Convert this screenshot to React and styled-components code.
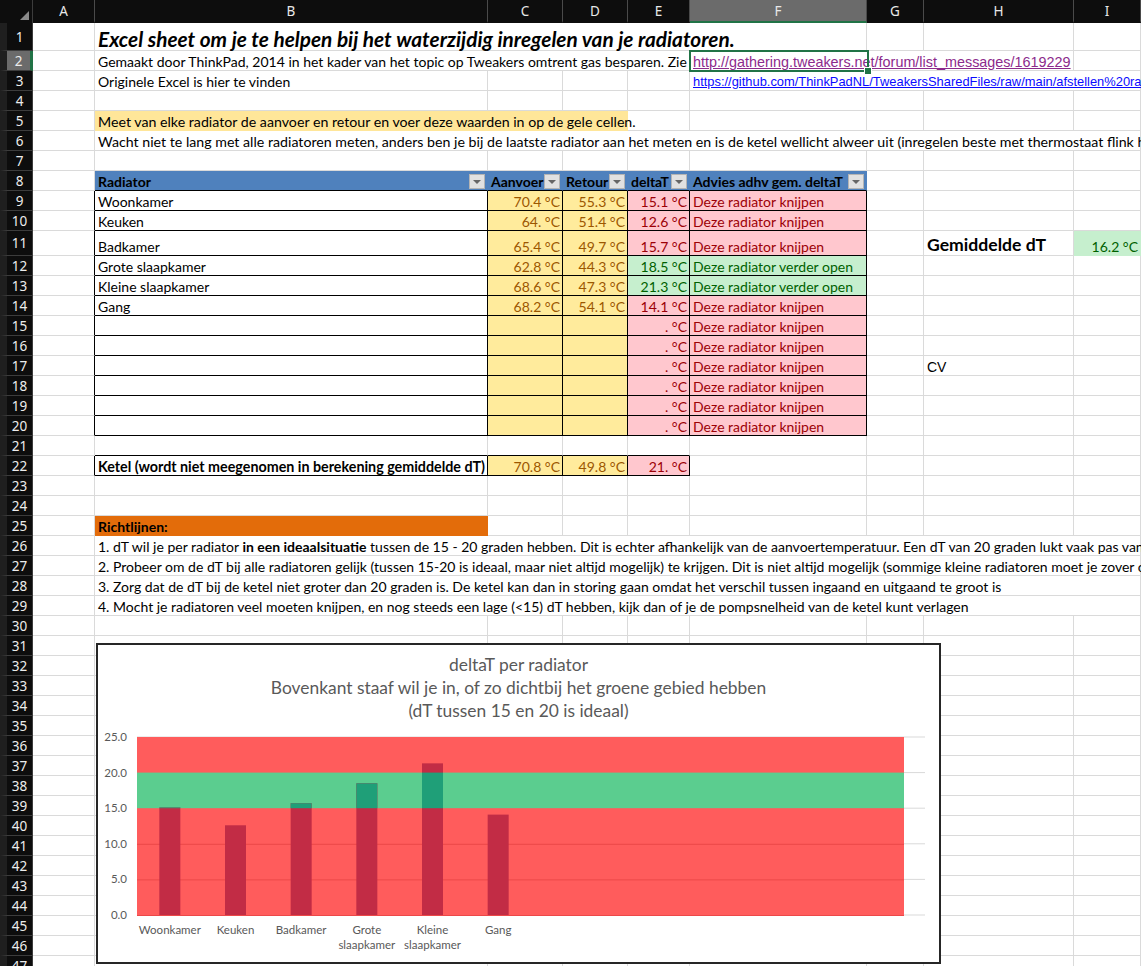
import React from 'react';
import styled, { createGlobalStyle } from 'styled-components';

const GlobalStyle = createGlobalStyle`
  html, body {
    margin: 0;
    padding: 0;
    background: #ffffff;
    overflow: hidden;
  }
`;

const GRID = '#dadada';
const BLACK = '#000000';
const BLUE = '#4f81bd';
const NEUTRAL = { $bg: '#ffeb9c', $fg: '#9c5700' };
const BAD = { $bg: '#ffc7ce', $fg: '#9c0006' };
const GOOD = { $bg: '#c6efce', $fg: '#006100' };

const COLS = { A: 62, B: 393, C: 75, D: 65, E: 62, F: 177, G: 57, H: 150, I: 67 };
const ORDER = ['A', 'B', 'C', 'D', 'E', 'F', 'G', 'H', 'I'];

const rowHeight = (n) => (n === 1 ? 28 : n === 11 ? 25 : 20);

const Sheet = styled.div`
  position: relative;
  width: 1141px;
  height: 966px;
  overflow: hidden;
  background: #ffffff;
  font-family: Lato, "Open Sans", sans-serif;
  font-size: 14px;
  color: #000;
`;

const HeaderBar = styled.div`
  display: flex;
  height: 23px;
  background: #0d0d0d;
`;

const Corner = styled.div`
  position: relative;
  flex: none;
  width: 33px;
  box-sizing: border-box;
  border-right: 1px solid #3c3c3c;

  &::after {
    content: '';
    position: absolute;
    right: 3px;
    bottom: 3px;
    border-style: solid;
    border-width: 0 0 9px 9px;
    border-color: transparent transparent #8a8a8a transparent;
  }
`;

const ColHead = styled.div`
  flex: none;
  width: ${(p) => p.$w}px;
  box-sizing: border-box;
  display: flex;
  align-items: flex-end;
  justify-content: center;
  padding-bottom: 2px;
  background: ${(p) => (p.$sel ? '#6b6b6b' : '#0d0d0d')};
  border-right: 1px solid #4a4a4a;
  border-bottom: 2px solid ${(p) => (p.$sel ? '#217346' : '#0d0d0d')};
  color: #e8e8e8;
  font-family: "Noto Sans", "DejaVu Sans", sans-serif;
  font-size: 13.5px;
  line-height: 16px;
`;

const Row = styled.div`
  display: flex;
  flex: none;
  height: ${(p) => p.$h}px;
`;

const RowHead = styled.div`
  flex: none;
  width: 33px;
  box-sizing: border-box;
  display: flex;
  align-items: center;
  justify-content: center;
  background: ${(p) => (p.$sel ? '#6b6b6b' : '#0d0d0d')};
  border-left: 7px solid #1f1f1f;
  border-right: ${(p) => (p.$sel ? '3px solid #217346' : '1px solid #3c3c3c')};
  border-bottom: 1px solid #3c3c3c;
  color: #ececec;
  font-family: "Noto Sans", "DejaVu Sans", sans-serif;
  font-size: 13.5px;
`;

const Cell = styled.div`
  flex: none;
  box-sizing: border-box;
  width: ${(p) => p.$w}px;
  display: flex;
  align-items: flex-end;
  justify-content: ${(p) => (p.$right ? 'flex-end' : 'flex-start')};
  padding: 0 2px 0 3px;
  border-right: 1px solid ${(p) => p.$rb || p.$bg || GRID};
  border-bottom: 1px solid ${(p) => p.$bb || p.$bg || GRID};
  background: ${(p) => p.$bg || 'transparent'};
  color: ${(p) => p.$fg || '#000'};
  font-weight: ${(p) => (p.$bold ? 700 : 400)};
  line-height: 16px;
  white-space: nowrap;
`;

const Title = styled.span`
  font-size: 20.8px;
  font-weight: 700;
  font-style: italic;
  line-height: 23px;
`;

const BigLabel = styled.span`
  font-size: 17.6px;
  font-weight: 700;
  line-height: 21px;
`;

const Link = styled.span`
  font-family: "Liberation Sans", Arial, sans-serif;
  font-size: ${(p) => (p.$visited ? 14.4 : 12.9)}px;
  color: ${(p) => (p.$visited ? '#8c2a8c' : '#0a0aff')};
  text-decoration: underline;
`;

const Plain = styled.span`
  font-family: "Liberation Sans", Arial, sans-serif;
  font-size: 14px;
`;

const Wide = styled.span`
  font-size: 14.3px;
`;

const Fill = styled.span`
  font-size: 14.2px;
`;

const HeadLabel = styled.span`
  font-weight: 700;
`;

const FilterBtn = styled.span`
  flex: none;
  margin-left: auto;
  margin-bottom: 1px;
  width: 16px;
  height: 15px;
  box-sizing: border-box;
  display: flex;
  align-items: center;
  justify-content: center;
  background: #e1e1e1;
  border: 1px solid #b4b4b4;

  &::after {
    content: '';
    border-style: solid;
    border-width: 4px 4px 0 4px;
    border-color: #666 transparent transparent transparent;
  }
`;

const Selection = styled.div`
  position: absolute;
  left: 689px;
  top: 50px;
  width: 180px;
  height: 22px;
  box-sizing: border-box;
  border: 2px solid #217346;
  pointer-events: none;

  &::after {
    content: '';
    position: absolute;
    right: -5px;
    bottom: -5px;
    width: 6px;
    height: 6px;
    background: #217346;
    border: 1px solid #ffffff;
  }
`;

const ChartBox = styled.div`
  position: absolute;
  left: 96px;
  top: 643px;
  width: 845px;
  height: 321px;
  box-sizing: border-box;
  border: 2px solid #262626;
  background: #ffffff;
  display: flex;
  flex-direction: column;
  align-items: center;
`;

const ChartTitle = styled.div`
  margin-top: 8px;
  font-family: Lato, "Open Sans", sans-serif;
  font-size: 17.4px;
  line-height: 23px;
  color: #595959;
  text-align: center;
`;

const Plot = styled.svg`
  display: block;
  align-self: flex-start;
  font-family: Lato, "Open Sans", sans-serif;
`;

const TABLE = [
  ['Woonkamer', '70.4 °C', '55.3 °C', '15.1 °C', false],
  ['Keuken', '64. °C', '51.4 °C', '12.6 °C', false],
  ['Badkamer', '65.4 °C', '49.7 °C', '15.7 °C', false],
  ['Grote slaapkamer', '62.8 °C', '44.3 °C', '18.5 °C', true],
  ['Kleine slaapkamer', '68.6 °C', '47.3 °C', '21.3 °C', true],
  ['Gang', '68.2 °C', '54.1 °C', '14.1 °C', false],
  ['', '', '', '. °C', false],
  ['', '', '', '. °C', false],
  ['', '', '', '. °C', false],
  ['', '', '', '. °C', false],
  ['', '', '', '. °C', false],
  ['', '', '', '. °C', false],
];

const box = { $rb: BLACK, $bb: BLACK };
const head = { $bg: BLUE, $bb: BLACK, $rb: BLUE };

function buildSpecs() {
  const specs = {};
  specs[1] = { B: { to: 'F', text: <Title>Excel sheet om je te helpen bij het waterzijdig inregelen van je radiatoren.</Title> } };
  specs[2] = {
    B: { to: 'E', text: 'Gemaakt door ThinkPad, 2014 in het kader van het topic op Tweakers omtrent gas besparen. Zie' },
    F: { to: 'H', text: <Link $visited>http://gathering.tweakers.net/forum/list_messages/1619229</Link> },
  };
  specs[3] = {
    B: { text: 'Originele Excel is hier te vinden' },
    F: { to: 'I', text: <Link>https://github.com/ThinkPadNL/TweakersSharedFiles/raw/main/afstellen%20radiatoren.xlsx</Link> },
  };
  specs[5] = { B: { to: 'D', $bg: '#ffe699', text: <Fill>Meet van elke radiator de aanvoer en retour en voer deze waarden in op de gele cellen.</Fill> } };
  specs[6] = {
    B: { to: 'I', text: <Fill>Wacht niet te lang met alle radiatoren meten, anders ben je bij de laatste radiator aan het meten en is de ketel wellicht alweer uit (inregelen beste met thermostaat flink hoog)</Fill> },
  };
  specs[8] = {
    B: { ...head, text: <><HeadLabel>Radiator</HeadLabel><FilterBtn /></> },
    C: { ...head, text: <><HeadLabel>Aanvoer</HeadLabel><FilterBtn /></> },
    D: { ...head, text: <><HeadLabel>Retour</HeadLabel><FilterBtn /></> },
    E: { ...head, text: <><HeadLabel>deltaT</HeadLabel><FilterBtn /></> },
    F: { ...head, text: <><HeadLabel>Advies adhv gem. deltaT</HeadLabel><FilterBtn /></> },
  };
  TABLE.forEach(([name, aan, ret, dt, good], i) => {
    const tone = good ? GOOD : BAD;
    specs[9 + i] = {
      A: { $rb: BLACK },
      B: { ...box, text: name },
      C: { ...box, ...NEUTRAL, $right: true, text: aan },
      D: { ...box, ...NEUTRAL, $right: true, text: ret },
      E: { ...box, ...tone, $right: true, text: dt },
      F: { ...box, ...tone, text: good ? 'Deze radiator verder open' : 'Deze radiator knijpen' },
    };
  });
  specs[11].H = { text: <BigLabel>Gemiddelde dT</BigLabel> };
  specs[11].I = { ...GOOD, $right: true, text: '16.2 °C' };
  specs[17].H = { text: <Plain>CV</Plain> };
  specs[21] = { B: { $bb: BLACK }, C: { $bb: BLACK }, D: { $bb: BLACK }, E: { $bb: BLACK } };
  specs[22] = {
    A: { $rb: BLACK },
    B: { ...box, $bold: true, text: <Wide>Ketel (wordt niet meegenomen in berekening gemiddelde dT)</Wide> },
    C: { ...box, ...NEUTRAL, $right: true, text: '70.8 °C' },
    D: { ...box, ...NEUTRAL, $right: true, text: '49.8 °C' },
    E: { ...box, ...BAD, $right: true, text: '21. °C' },
  };
  specs[25] = { B: { $bg: '#e36c0a', $bold: true, text: 'Richtlijnen:' } };
  specs[26] = {
    B: {
      to: 'I',
      text: (
        <span>
          1. dT wil je per radiator <b>in een ideaalsituatie</b> tussen de 15 - 20 graden hebben. Dit is echter afhankelijk van de aanvoertemperatuur. Een dT van 20 graden lukt vaak pas vanaf 60+ graden aanvoer
        </span>
      ),
    },
  };
  specs[27] = {
    B: { to: 'I', text: '2. Probeer om de dT bij alle radiatoren gelijk (tussen 15-20 is ideaal, maar niet altijd mogelijk) te krijgen. Dit is niet altijd mogelijk (sommige kleine radiatoren moet je zover open zetten)' },
  };
  specs[28] = {
    B: { to: 'I', text: '3. Zorg dat de dT bij de ketel niet groter dan 20 graden is. De ketel kan dan in storing gaan omdat het verschil tussen ingaand en uitgaand te groot is' },
  };
  specs[29] = {
    B: { to: 'I', text: '4. Mocht je radiatoren veel moeten knijpen, en nog steeds een lage (<15) dT hebben, kijk dan of je de pompsnelheid van de ketel kunt verlagen' },
  };
  return specs;
}

const SPECS = buildSpecs();

function SheetRow({ n }) {
  const spec = SPECS[n] || {};
  const cells = [];
  for (let i = 0; i < ORDER.length; i++) {
    const c = ORDER[i];
    const { to, text, ...rest } = spec[c] || {};
    const end = to ? ORDER.indexOf(to) : i;
    const w = ORDER.slice(i, end + 1).reduce((s, k) => s + COLS[k], 0);
    cells.push(
      <Cell key={c} $w={w} {...rest}>
        {text}
      </Cell>
    );
    i = end;
  }
  return (
    <Row $h={rowHeight(n)}>
      <RowHead $sel={n === 2}>{n}</RowHead>
      {cells}
    </Row>
  );
}

const VALUES = [15.1, 12.6, 15.7, 18.5, 21.3, 14.1];
const LABELS = [['Woonkamer'], ['Keuken'], ['Badkamer'], ['Grote', 'slaapkamer'], ['Kleine', 'slaapkamer'], ['Gang']];
const X0 = 39;
const XR = 806;
const XG = 827;
const CW = (XG - X0) / 12;
const Y0 = 193;
const PX = 7.12;
const BAR = 21;
const yv = (v) => Y0 - v * PX;

function Chart() {
  return (
    <ChartBox>
      <ChartTitle>
        deltaT per radiator
        <br />
        Bovenkant staaf wil je in, of zo dichtbij het groene gebied hebben
        <br />
        (dT tussen 15 en 20 is ideaal)
      </ChartTitle>
      <Plot width="841" height="239">
        {[0, 5, 10, 15, 20, 25].map((v) => (
          <line key={'g' + v} x1={X0} x2={XG} y1={yv(v)} y2={yv(v)} stroke="#d9d9d9" />
        ))}
        <rect x={X0} y={yv(25)} width={XR - X0} height={25 * PX} fill="#ff5c5c" />
        <rect x={X0} y={yv(20)} width={XR - X0} height={5 * PX} fill="#5bcd8f" />
        {[0, 5, 10].map((v) => (
          <line key={'r' + v} x1={X0} x2={XR} y1={yv(v) + 0.5} y2={yv(v) + 0.5} stroke="#ec4848" />
        ))}
        {VALUES.map((v, i) => {
          const x = X0 + (i + 0.5) * CW - BAR / 2;
          return (
            <g key={'b' + i}>
              <rect x={x} y={yv(v)} width={BAR} height={v * PX} fill="#c22c45" />
              {v > 15 && (
                <rect x={x} y={yv(Math.min(v, 20))} width={BAR} height={(Math.min(v, 20) - 15) * PX} fill="#1f9f78" />
              )}
            </g>
          );
        })}
        {[0, 5, 10, 15, 20, 25].map((v) => (
          <text key={'y' + v} x="29" y={yv(v) + 4} textAnchor="end" fontSize="11.5" fill="#595959">
            {v.toFixed(1)}
          </text>
        ))}
        {LABELS.map((lines, i) => (
          <text key={'x' + i} x={X0 + (i + 0.5) * CW} y="212" textAnchor="middle" fontSize="11.5" fill="#595959">
            {lines.map((t, j) => (
              <tspan key={j} x={X0 + (i + 0.5) * CW} dy={j === 0 ? 0 : 15}>
                {t}
              </tspan>
            ))}
          </text>
        ))}
      </Plot>
    </ChartBox>
  );
}

export default function App() {
  const rows = [];
  for (let n = 1; n <= 47; n++) rows.push(<SheetRow key={n} n={n} />);
  return (
    <>
      <GlobalStyle />
      <Sheet>
        <HeaderBar>
          <Corner />
          {ORDER.map((c) => (
            <ColHead key={c} $w={COLS[c]} $sel={c === 'F'}>
              {c}
            </ColHead>
          ))}
        </HeaderBar>
        {rows}
        <Selection />
        <Chart />
      </Sheet>
    </>
  );
}
